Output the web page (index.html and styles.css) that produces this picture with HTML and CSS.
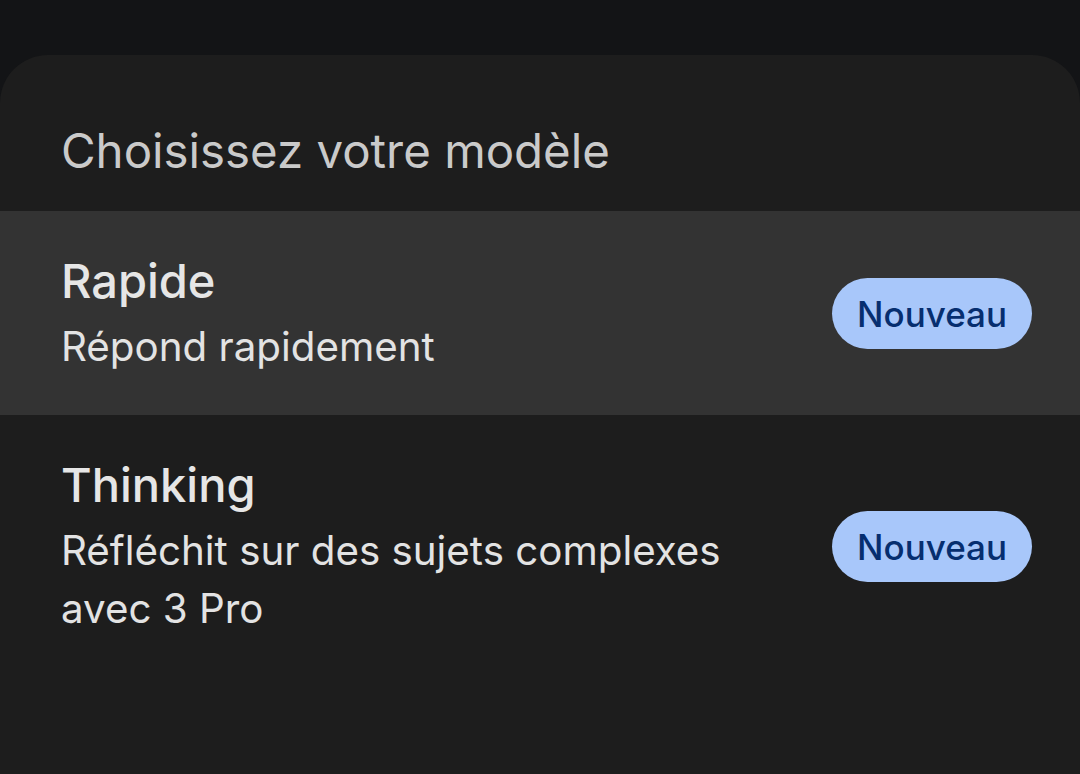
FILE: index.html
```html
<!DOCTYPE html>
<html lang="fr">
<head>
<meta charset="utf-8">
<title>Choisissez votre modèle</title>
<link rel="stylesheet" href="styles.css">
</head>
<body>
<div class="sheet">
  <div class="sheet-header">Choisissez votre modèle</div>
  <div class="option option-selected">
    <div class="option-text">
      <div class="option-title">Rapide</div>
      <div class="option-desc">Répond rapidement</div>
    </div>
    <span class="badge">Nouveau</span>
  </div>
  <div class="option">
    <div class="option-text">
      <div class="option-title">Thinking</div>
      <div class="option-desc">Réfléchit sur des sujets complexes<br>avec 3 Pro</div>
    </div>
    <span class="badge">Nouveau</span>
  </div>
</div>
</body>
</html>
```

FILE: styles.css
```css
html, body {
  margin: 0;
  padding: 0;
  height: 100%;
}
body {
  background: #131416;
  font-family: Inter, Roboto, sans-serif;
  overflow: hidden;
}
.sheet {
  margin-top: 55px;
  height: calc(100% - 55px);
  background: #1d1d1d;
  border-radius: 48px 48px 0 0;
}
.sheet-header {
  padding: 68px 48px 32px 61px;
  font-size: 47.4px;
  line-height: 56px;
  color: #cacaca;
}
.option {
  display: flex;
  align-items: center;
  justify-content: space-between;
  padding: 40px 48px 39px 61px;
}
.option-selected {
  background: #333333;
}
.option-title {
  font-size: 47px;
  line-height: 60px;
  font-weight: 500;
  color: #e6e6e6;
}
.option-desc {
  margin-top: 7px;
  font-size: 40.3px;
  line-height: 58px;
  color: #e3e3e3;
}
.badge {
  display: flex;
  align-items: center;
  height: 71px;
  padding: 0 25px;
  border-radius: 36px;
  background: #a8c7fa;
  color: #062e6f;
  font-size: 35px;
  font-weight: 500;
}
```
